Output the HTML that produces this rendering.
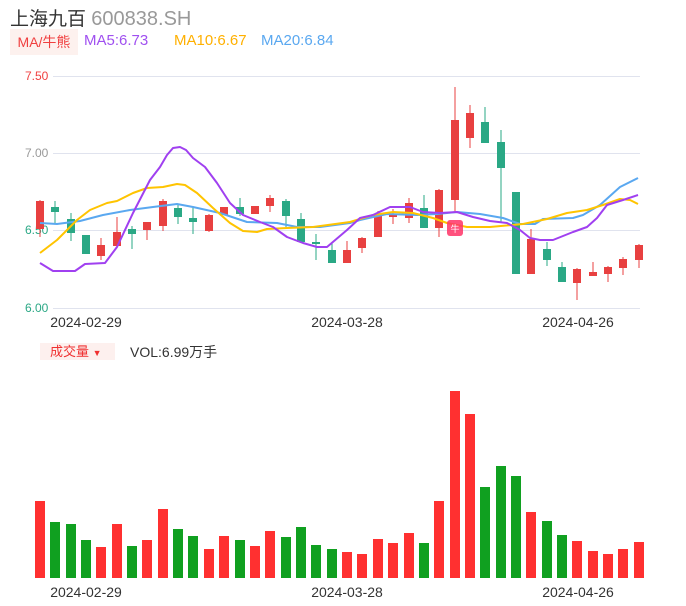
<!DOCTYPE html>
<html><head><meta charset="utf-8"><style>
body{margin:0;width:686px;height:606px;background:#fff;font-family:"Liberation Sans","Noto Sans CJK SC",sans-serif;overflow:hidden;position:relative}
.t{position:absolute;white-space:nowrap}
</style></head><body>
<div class="t" style="left:10px;top:4px;font-size:19px;color:#333">上海九百 <span style="color:#999;font-size:20px">600838.SH</span></div>
<div class="t" style="left:10px;top:29px;width:68px;height:26px;background:#fdf1ee;color:#f04040;font-size:14px;line-height:26px;text-align:center">MA/牛熊</div>
<div class="t" style="left:84px;top:32px;font-size:15px;color:#a050f0">MA5:6.73</div>
<div class="t" style="left:174px;top:32px;font-size:15px;color:#ffb000">MA10:6.67</div>
<div class="t" style="left:261px;top:32px;font-size:15px;color:#5aa8f0">MA20:6.84</div>
<div class="t" style="left:40px;top:343px;width:75px;height:17px;background:#fdf0ee;color:#f03030;font-size:13px;line-height:17px;text-indent:10px">成交量 <span style="font-size:9px">▼</span></div>
<div class="t" style="left:130px;top:342px;font-size:14px;color:#333">VOL:6.99万手</div>
<svg width="686" height="606" style="position:absolute;left:0;top:0" font-family="Liberation Sans,sans-serif" font-size="12">
<g stroke="#e0e3ee" stroke-width="1">
<line x1="53" y1="76.5" x2="640" y2="76.5"/><line x1="53" y1="153.5" x2="640" y2="153.5"/><line x1="53" y1="230.5" x2="640" y2="230.5"/><line x1="53" y1="308.5" x2="640" y2="308.5"/>
</g>
<text x="25" y="80" fill="#f04040">7.50</text>
<text x="25" y="157" fill="#999">7.00</text>
<text x="25" y="234" fill="#2aa885">6.50</text>
<text x="25" y="312" fill="#2aa885">6.00</text>
<g font-size="14" fill="#333" text-anchor="middle">
<text x="86" y="327">2024-02-29</text><text x="347" y="327">2024-03-28</text><text x="578" y="327">2024-04-26</text>
<text x="86" y="597">2024-02-29</text><text x="347" y="597">2024-03-28</text><text x="578" y="597">2024-04-26</text>
</g>
<g stroke-width="1">
<g stroke="#e84040">
<line x1="40" y1="200" x2="40" y2="237"/><line x1="101" y1="238" x2="101" y2="260"/><line x1="117" y1="217" x2="117" y2="246"/><line x1="147" y1="222" x2="147" y2="240"/><line x1="163" y1="199" x2="163" y2="231"/><line x1="209" y1="214" x2="209" y2="232"/><line x1="224" y1="207" x2="224" y2="215"/><line x1="255" y1="206" x2="255" y2="214"/><line x1="270" y1="195" x2="270" y2="212"/><line x1="347" y1="241" x2="347" y2="263"/><line x1="362" y1="237" x2="362" y2="253"/><line x1="378" y1="211" x2="378" y2="237"/><line x1="393" y1="209" x2="393" y2="224"/><line x1="409" y1="198" x2="409" y2="223"/><line x1="439" y1="189" x2="439" y2="237"/><line x1="455" y1="87" x2="455" y2="212"/><line x1="470" y1="105" x2="470" y2="148"/><line x1="531" y1="229" x2="531" y2="274"/><line x1="577" y1="268" x2="577" y2="300"/><line x1="593" y1="262" x2="593" y2="276"/><line x1="608" y1="266" x2="608" y2="282"/><line x1="623" y1="257" x2="623" y2="275"/><line x1="639" y1="244" x2="639" y2="268"/>
</g>
<g stroke="#2aa885">
<line x1="55" y1="201" x2="55" y2="223"/><line x1="71" y1="213" x2="71" y2="241"/><line x1="132" y1="226" x2="132" y2="249"/><line x1="178" y1="204" x2="178" y2="224"/><line x1="193" y1="207" x2="193" y2="234"/><line x1="240" y1="198" x2="240" y2="216"/><line x1="286" y1="199" x2="286" y2="227"/><line x1="301" y1="213" x2="301" y2="242"/><line x1="316" y1="234" x2="316" y2="260"/><line x1="332" y1="242" x2="332" y2="263"/><line x1="424" y1="195" x2="424" y2="228"/><line x1="485" y1="107" x2="485" y2="143"/><line x1="501" y1="130" x2="501" y2="222"/><line x1="547" y1="242" x2="547" y2="266"/><line x1="562" y1="262" x2="562" y2="282"/>
</g>
</g>
<g fill="#e84040">
<rect x="36" y="201" width="8" height="28"/><rect x="97" y="245" width="8" height="11"/><rect x="113" y="232" width="8" height="14"/><rect x="143" y="222" width="8" height="8"/><rect x="159" y="201" width="8" height="25"/><rect x="205" y="215" width="8" height="16"/><rect x="220" y="207" width="8" height="8"/><rect x="251" y="206" width="8" height="8"/><rect x="266" y="198" width="8" height="8"/><rect x="343" y="250" width="8" height="13"/><rect x="358" y="238" width="8" height="10"/><rect x="374" y="215" width="8" height="22"/><rect x="389" y="215" width="8" height="2"/><rect x="405" y="203" width="8" height="15"/><rect x="435" y="190" width="8" height="38"/><rect x="451" y="120" width="8" height="80"/><rect x="466" y="113" width="8" height="25"/><rect x="527" y="239" width="8" height="35"/><rect x="573" y="269" width="8" height="14"/><rect x="589" y="272" width="8" height="4"/><rect x="604" y="267" width="8" height="7"/><rect x="619" y="259" width="8" height="9"/><rect x="635" y="245" width="8" height="15"/>
</g>
<g fill="#2aa885">
<rect x="51" y="207" width="8" height="5"/><rect x="67" y="219" width="8" height="14"/><rect x="82" y="235" width="8" height="19"/><rect x="128" y="229" width="8" height="5"/><rect x="174" y="208" width="8" height="9"/><rect x="189" y="218" width="8" height="4"/><rect x="236" y="207" width="8" height="7"/><rect x="282" y="201" width="8" height="15"/><rect x="297" y="219" width="8" height="23"/><rect x="312" y="242" width="8" height="2"/><rect x="328" y="250" width="8" height="13"/><rect x="420" y="208" width="8" height="20"/><rect x="481" y="122" width="8" height="21"/><rect x="497" y="142" width="8" height="26"/><rect x="512" y="192" width="8" height="82"/><rect x="543" y="249" width="8" height="11"/><rect x="558" y="267" width="8" height="15"/>
</g>
<g fill="none" stroke-width="2" stroke-linejoin="round">
<polyline stroke="#5aa8f0" points="40,223 57,224 80,221 103,215 130,210 153,207 177,204 193,207 220,213 247,222 277,223 297,227 320,227 350,223 360,220 387,214 417,215 437,214 457,212 480,214 503,218 520,224 535,224 543,219 573,218 583,215 600,205 620,187 638,178"/>
<polyline stroke="#ffc400" points="40,253 57,240 77,220 90,210 107,203 117,201 133,193 147,188 163,187 177,184 185,185 197,193 213,208 230,223 243,231 257,232 267,229 287,228 313,227 350,222 373,215 393,212 413,213 433,218 447,223 467,227 490,227 523,224 547,219 567,213 587,210 603,205 620,199 630,200 638,204"/>
<polyline stroke="#a040f0" points="40,263 53,271 75,271 85,264 105,263 117,247 133,213 150,180 160,167 167,155 173,148 180,147 186,150 193,158 205,167 217,183 230,203 243,215 260,222 273,227 287,237 303,243 317,247 327,247 347,230 360,218 373,215 390,207 410,207 423,212 440,213 457,212 473,217 490,221 507,223 520,230 530,238 540,240 553,240 573,232 587,227 597,218 607,205 623,200 638,195"/>
</g>
<rect x="447" y="220" width="16" height="16" rx="3" fill="#ff3366" opacity="0.85"/>
<text x="455" y="232" font-size="9" fill="#fff" text-anchor="middle" font-family="Noto Sans CJK SC,sans-serif">牛</text>
<g fill="#ff3030">
<rect x="35" y="501" width="10" height="77"/><rect x="96" y="547" width="10" height="31"/><rect x="112" y="524" width="10" height="54"/><rect x="142" y="540" width="10" height="38"/><rect x="158" y="509" width="10" height="69"/><rect x="204" y="549" width="10" height="29"/><rect x="219" y="536" width="10" height="42"/><rect x="250" y="546" width="10" height="32"/><rect x="265" y="531" width="10" height="47"/><rect x="342" y="552" width="10" height="26"/><rect x="357" y="554" width="10" height="24"/><rect x="373" y="539" width="10" height="39"/><rect x="388" y="543" width="10" height="35"/><rect x="404" y="533" width="10" height="45"/><rect x="434" y="501" width="10" height="77"/><rect x="450" y="391" width="10" height="187"/><rect x="465" y="414" width="10" height="164"/><rect x="526" y="512" width="10" height="66"/><rect x="572" y="541" width="10" height="37"/><rect x="588" y="551" width="10" height="27"/><rect x="603" y="554" width="10" height="24"/><rect x="618" y="549" width="10" height="29"/><rect x="634" y="542" width="10" height="36"/>
</g>
<g fill="#10a020">
<rect x="50" y="522" width="10" height="56"/><rect x="66" y="524" width="10" height="54"/><rect x="81" y="540" width="10" height="38"/><rect x="127" y="546" width="10" height="32"/><rect x="173" y="529" width="10" height="49"/><rect x="188" y="536" width="10" height="42"/><rect x="235" y="540" width="10" height="38"/><rect x="281" y="537" width="10" height="41"/><rect x="296" y="527" width="10" height="51"/><rect x="311" y="545" width="10" height="33"/><rect x="327" y="549" width="10" height="29"/><rect x="419" y="543" width="10" height="35"/><rect x="480" y="487" width="10" height="91"/><rect x="496" y="466" width="10" height="112"/><rect x="511" y="476" width="10" height="102"/><rect x="542" y="521" width="10" height="57"/><rect x="557" y="535" width="10" height="43"/>
</g>
</svg>
</body></html>
